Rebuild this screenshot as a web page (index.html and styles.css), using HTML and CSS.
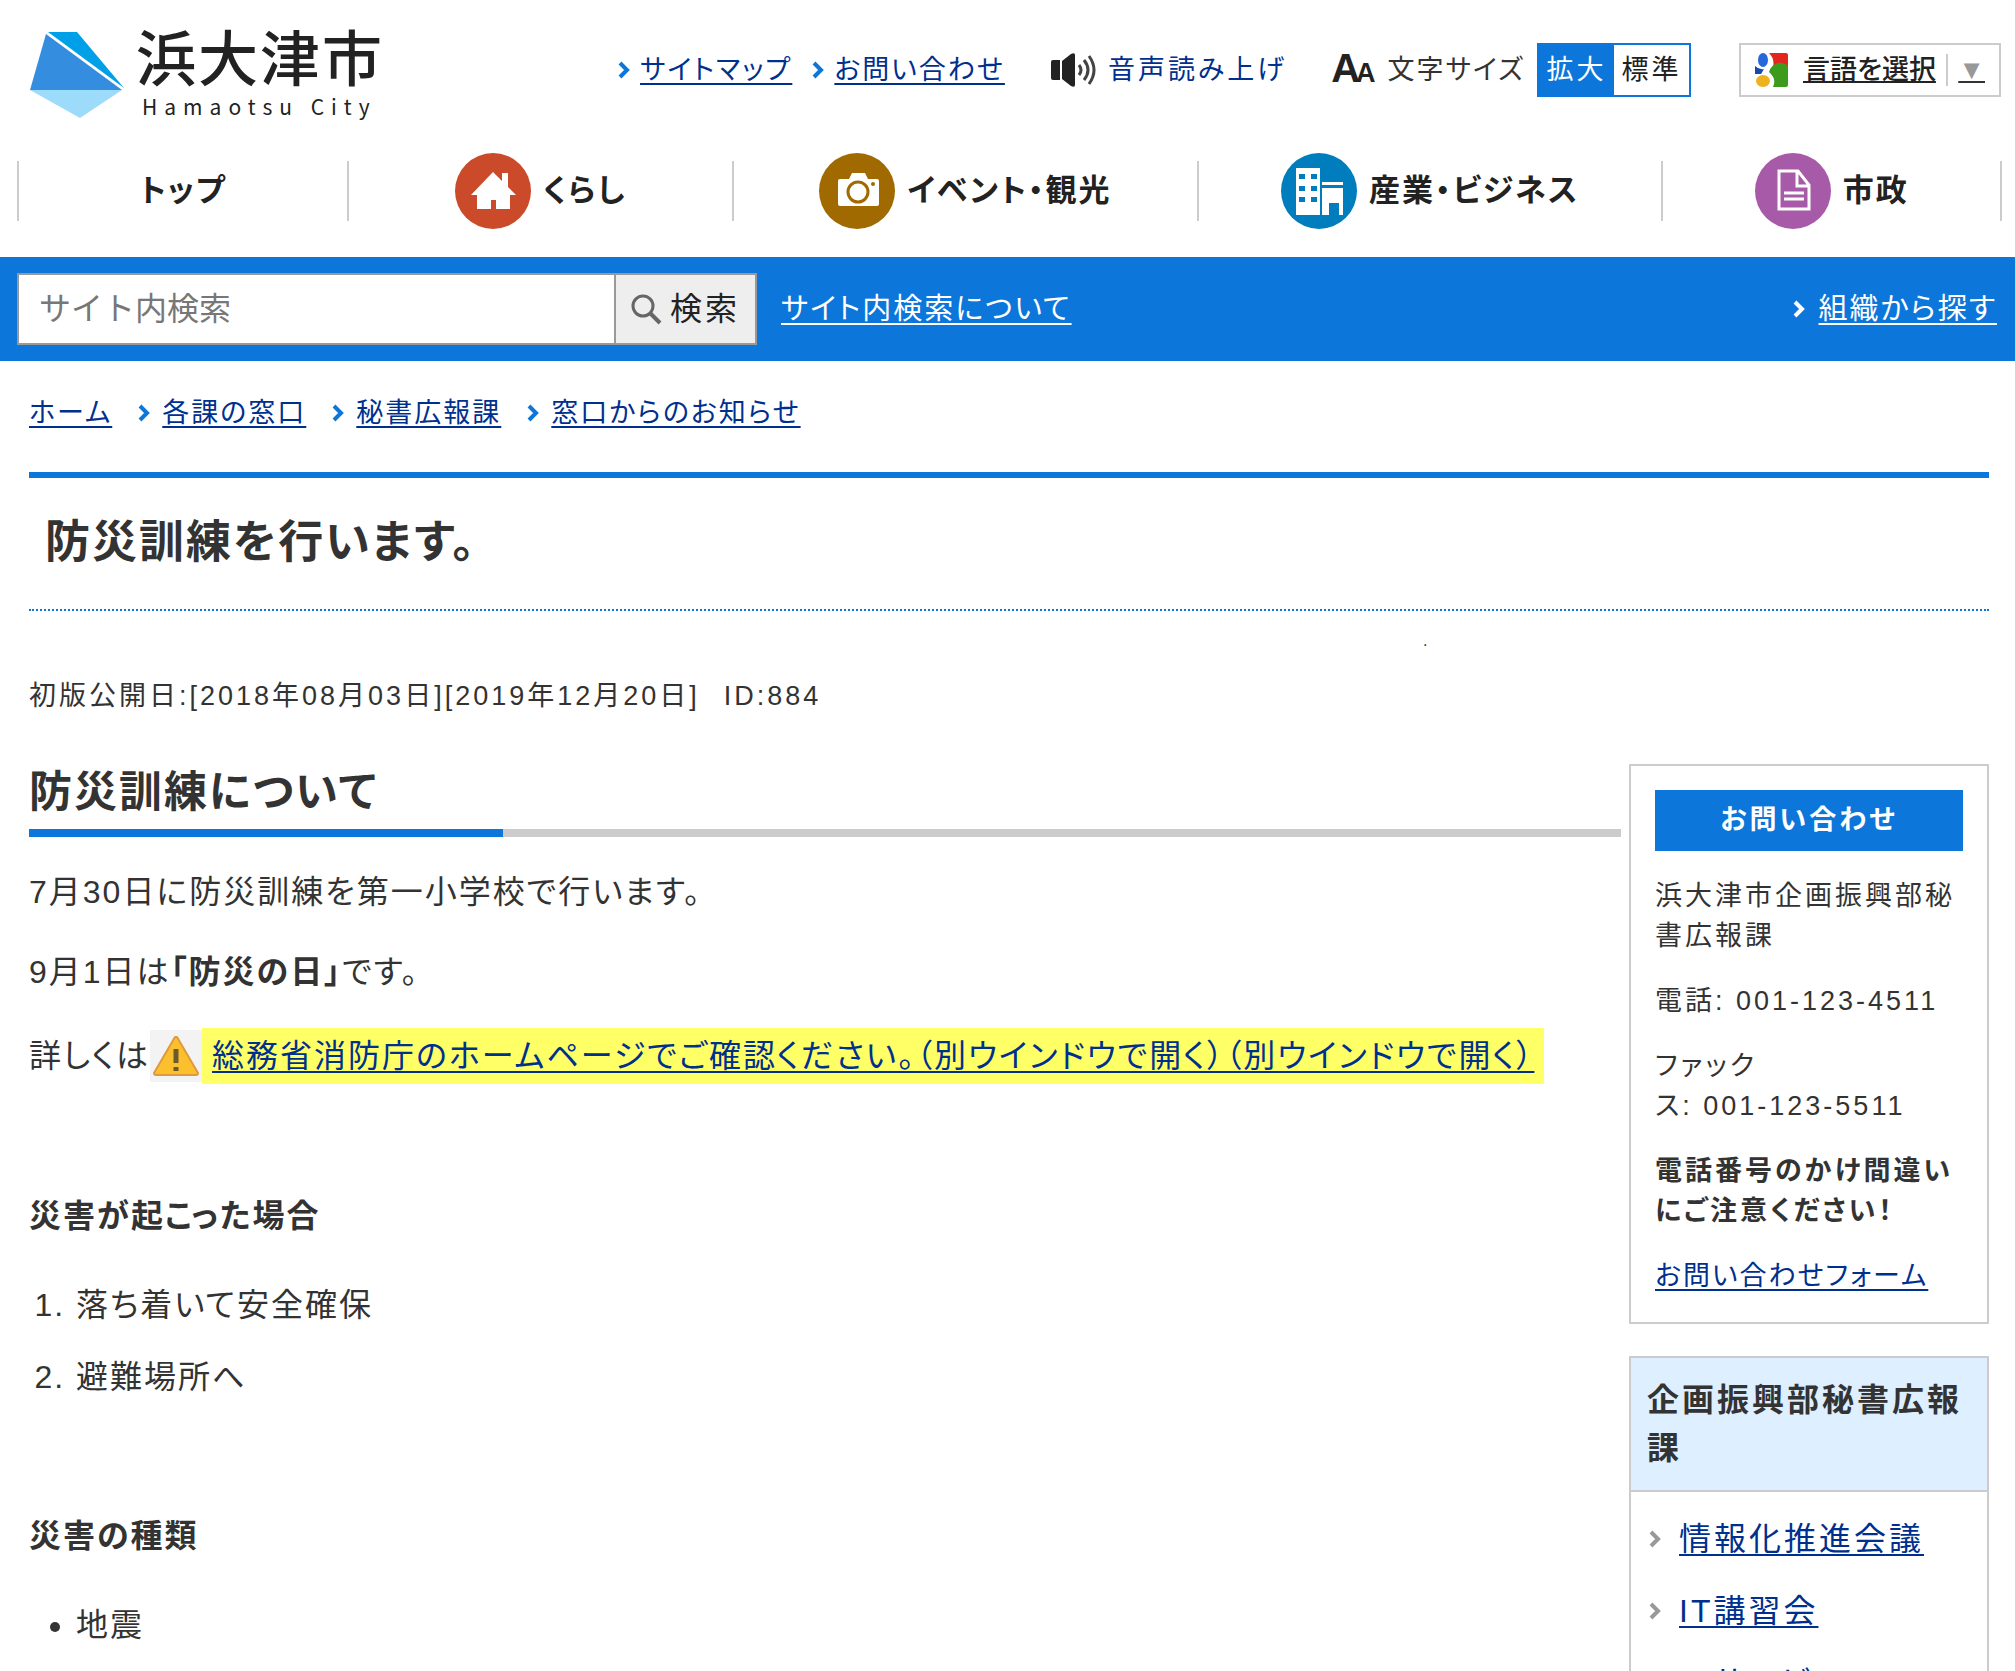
FILE: index.html
```html
<!DOCTYPE html>
<html lang="ja">
<head>
<meta charset="utf-8">
<title>防災訓練を行います。 | 浜大津市</title>
<link rel="stylesheet" href="styles.css">
</head>
<body>
<svg class="defs" width="0" height="0" aria-hidden="true">
  <symbol id="chevron" viewBox="0 0 12 18"><path d="M2 2l7 7-7 7" fill="none" stroke="currentColor" stroke-width="4"/></symbol>
</svg>
<header class="header">
  <a class="logo" href="#">
    <svg class="logo-mark" viewBox="0 0 94 86" aria-hidden="true">
      <path d="M16 2L0 58h92z" fill="#358de0"/>
      <path d="M18 0h29l47 56z" fill="#00a0e9"/>
      <path d="M0 58h92L50 86z" fill="#9cdcfa"/>
    </svg>
    <span class="logo-text"><span class="logo-ja">浜大津市</span><span class="logo-en">Hamaotsu City</span></span>
  </a>
  <div class="tools">
    <ul class="tool-links">
      <li><svg class="chev"><use href="#chevron"/></svg><a href="#">サイトマップ</a></li>
      <li><svg class="chev"><use href="#chevron"/></svg><a href="#">お問い合わせ</a></li>
    </ul>
    <a class="speech" href="#">
      <svg width="45" height="34" viewBox="0 0 45 34" aria-hidden="true"><path d="M0 9q0-2 2-2h7v20H2q-2 0-2-2zM11 8l9-7q4-2 4 1v30q0 3-4 1l-9-7z" fill="#222"/><g fill="none" stroke="#444" stroke-width="3"><path d="M28 12q4 5 0 10M33 7q8 10 0 20M38 3q10 14 0 28"/></g></svg>
      音声読み上げ
    </a>
    <div class="size">
      <span class="size-icon" aria-hidden="true"><b>A</b><b class="small-a">A</b></span>
      <span class="size-label">文字サイズ</span>
      <div class="size-switch"><button class="on" type="button">拡大</button><button type="button">標準</button></div>
    </div>
    <button class="lang" type="button">
      <svg width="34" height="34" viewBox="0 0 34 34" aria-hidden="true"><path d="M14 0h17q2 0 2 2v12H18q2-8-4-14z" fill="#e3261f"/><path d="M14 19q2-7 9-9 6-1 10 3v19q0 2-2 2H18q4-8-4-15z" fill="#3c9a1c"/><ellipse cx="8" cy="7" rx="5" ry="7" fill="#2668dc"/><path d="M0 13q4 4 9 3l-3 5H0z" fill="#154bb0"/><ellipse cx="8" cy="28" rx="7" ry="6" fill="#eeb21c"/></svg>
      <span class="lang-text">言語を選択</span><span class="lang-arrow">▼</span>
    </button>
  </div>
</header>
<nav class="nav">
  <a href="#">トップ</a>
  <a href="#"><svg class="nav-icon" viewBox="0 0 76 76" aria-hidden="true"><circle cx="38" cy="38" r="38" fill="#ca4a2a"/><path d="M38 19l9 9v-8h6v14l8 8h-6v14H41v-9h-5v9H22V42h-6z" fill="#fff"/></svg>くらし</a>
  <a href="#"><svg class="nav-icon" viewBox="0 0 76 76" aria-hidden="true"><circle cx="38" cy="38" r="38" fill="#a16a00"/><path d="M19 28q0-2 2-2h9l3-6h13l3 6h9q2 0 2 2v23q0 2-2 2H21q-2 0-2-2z" fill="#fff"/><circle cx="39" cy="39" r="10" fill="none" stroke="#a16a00" stroke-width="3"/><circle cx="54" cy="31" r="2" fill="#a16a00"/></svg>イベント・観光</a>
  <a href="#"><svg class="nav-icon" viewBox="0 0 76 76" aria-hidden="true"><circle cx="38" cy="38" r="38" fill="#007dbc"/><path d="M15 15h24v47H15zM41 29h21v3H41zM41 35h21v27h-4V50H48v12h-7z" fill="#fff"/><path d="M18 21h6v5h-6zM30 21h6v5h-6zM18 33h6v5h-6zM30 33h6v5h-6zM18 44h6v5h-6zM30 44h6v5h-6z" fill="#007dbc"/></svg>産業・ビジネス</a>
  <a href="#"><svg class="nav-icon" viewBox="0 0 76 76" aria-hidden="true"><circle cx="38" cy="38" r="38" fill="#a75aa8"/><path d="M24 18h19l11 14v24H24zM42 18v15h12M29 40h20M29 46h20" fill="none" stroke="#fff" stroke-width="3"/></svg>市政</a>
</nav>
<div class="searchbar">
  <form class="search">
    <input type="search" aria-label="サイト内検索" placeholder="サイト内検索">
    <button type="button"><svg width="32" height="32" viewBox="0 0 32 32" aria-hidden="true"><circle cx="13" cy="13" r="10" fill="none" stroke="#666" stroke-width="3"/><path d="M20 20l10 10" stroke="#666" stroke-width="4"/></svg>検索</button>
  </form>
  <a href="#">サイト内検索について</a>
  <span class="org"><svg class="chev"><use href="#chevron"/></svg><a href="#">組織から探す</a></span>
</div>
<div class="page">
  <ol class="crumbs">
    <li><a href="#">ホーム</a></li>
    <li><svg class="chev"><use href="#chevron"/></svg><a href="#">各課の窓口</a></li>
    <li><svg class="chev"><use href="#chevron"/></svg><a href="#">秘書広報課</a></li>
    <li><svg class="chev"><use href="#chevron"/></svg><a href="#">窓口からのお知らせ</a></li>
  </ol>
  <h1>防災訓練を行います。</h1>
  <p class="dot">.</p>
  <p class="date"><span>初版公開日:[2018年08月03日][2019年12月20日]</span><span>ID:884</span></p>
  <div class="columns">
    <main class="main">
      <h2>防災訓練について</h2>
      <p>7月30日に防災訓練を第一小学校で行います。</p>
      <p>9月1日は<strong>「防災の日」</strong>です。</p>
      <p class="notice"><span>詳しくは</span><svg width="52" height="52" viewBox="0 0 52 52" aria-hidden="true"><path d="M0 0h52v52H0z" fill="#f3f3f3"/><path d="M25 7L4 43q0 2 2 2h40q2 0 2-2L27 7z" fill="#fcc02e" stroke="#e09a3c" stroke-width="2" stroke-linejoin="round"/><path d="M26 19v14M26 37v4" stroke="#6b5a2c" stroke-width="5"/></svg><a class="mark" href="#">総務省消防庁のホームページでご確認ください。（別ウインドウで開く）（別ウインドウで開く）</a></p>
      <h3>災害が起こった場合</h3>
      <ol><li>落ち着いて安全確保</li><li>避難場所へ</li></ol>
      <h3>災害の種類</h3>
      <ul><li>地震</li></ul>
    </main>
    <aside class="side">
      <section class="contact">
        <h2>お問い合わせ</h2>
        <p>浜大津市企画振興部秘書広報課</p>
        <p>電話: 001-123-4511</p>
        <p>ファック<br>ス: 001-123-5511</p>
        <p><strong>電話番号のかけ間違いにご注意ください！</strong></p>
        <p><a href="#">お問い合わせフォーム</a></p>
      </section>
      <section class="dept">
        <h2>企画振興部秘書広報課</h2>
        <ul>
          <li><svg class="chev"><use href="#chevron"/></svg><a href="#">情報化推進会議</a></li>
          <li><svg class="chev"><use href="#chevron"/></svg><a href="#">IT講習会</a></li>
          <li><svg class="chev"><use href="#chevron"/></svg><a href="#">ITサービス</a></li>
        </ul>
      </section>
    </aside>
  </div>
</div>
</body>
</html>
```
FILE: styles.css
```css
* { box-sizing: border-box; }
body {
  margin: 0;
  background: #fff;
  color: #333;
  font: 32px/48px "Liberation Sans", "Noto Sans CJK JP", sans-serif;
  font-feature-settings: "palt";
  letter-spacing: 2px;
}
a { color: #00308e; text-underline-offset: 4px; text-decoration-thickness: 2px; }
button, input { font: inherit; letter-spacing: inherit; color: #222; }
ul, ol { margin: 0; padding: 0; }
svg { flex: none; }
.defs { position: absolute; }
.chev { width: 12px; height: 18px; color: #0d76da; }

.header { display: flex; justify-content: space-between; padding: 28px 14px 0 30px; height: 140px; font-size: 27px; }
.logo { display: flex; gap: 12px; color: #222; text-decoration: none; }
.logo-mark { width: 94px; height: 86px; margin-top: 4px; }
.logo-text { display: flex; flex-direction: column; padding-top: 2px; }
.logo-ja { font-size: 60px; line-height: 62px; font-weight: 500; font-feature-settings: normal; }
.logo-en { font: 21px/28px "Noto Sans CJK JP", sans-serif; letter-spacing: 7px; padding-left: 6px; }
.tools { display: flex; align-items: center; height: 84px; }
.tool-links { display: flex; gap: 20px; list-style: none; }
.tool-links li { display: flex; align-items: center; gap: 10px; }
.speech { display: flex; align-items: center; gap: 12px; margin-left: 46px; text-decoration: none; letter-spacing: 3px; }
.size { display: flex; align-items: center; margin-left: 44px; }
.size-icon { color: #222; font: 40px/40px "Liberation Sans", sans-serif; letter-spacing: 0; }
.size-icon .small-a { font-size: 27px; margin-left: -4px; }
.size-label { margin: 0 12px; }
.size-switch { display: flex; height: 54px; border: 2px solid #0d76da; letter-spacing: 3px; }
.size-switch button { width: 75px; border: 0; padding: 0; background: #fff; }
.size-switch .on { background: #0d76da; color: #fff; }
.lang { display: flex; align-items: center; height: 54px; width: 262px; margin-left: 48px; padding: 0 14px; border: 2px solid #ccc; background: #fff; font-size: 27px; letter-spacing: 0; }
.lang-text { margin-left: 14px; font-weight: 500; text-decoration: underline; }
.lang-arrow { margin-left: auto; padding-left: 10px; border-left: 2px solid #ccc; line-height: 32px; color: #999; text-decoration: underline #333; }

.nav { display: grid; grid-template-columns: 330fr 384fr 464fr 464fr 340fr; align-items: center; margin: 0 13px 0 17px; height: 117px; font-size: 31px; font-weight: bold; }
.nav a { display: flex; align-items: center; justify-content: center; gap: 12px; height: 60px; margin-bottom: 16px; border-left: 2px solid #ccc; color: #222; text-decoration: none; }
.nav a:last-child { border-right: 2px solid #ccc; }
.nav-icon { width: 76px; height: 76px; }

.searchbar { display: flex; align-items: center; height: 104px; padding: 0 18px 0 17px; background: #0d76da; }
.searchbar a { color: #fff; font-size: 29px; }
.search { display: flex; width: 740px; height: 72px; margin-right: 24px; border: 2px solid #999; }
.search input { flex: 1; min-width: 0; border: 0; padding: 0 20px; background: #fff; letter-spacing: 0; font-feature-settings: normal; }
.search input::placeholder { color: #777; }
.search button { display: flex; align-items: center; gap: 8px; width: 141px; padding: 0 14px; border: 0; border-left: 2px solid #999; background: #eee; letter-spacing: 3px; }
.org { display: flex; align-items: center; gap: 14px; margin-left: auto; }
.org .chev { color: #fff; }

.page { padding: 0 26px 0 29px; }
.crumbs { display: flex; gap: 26px; padding: 28px 0 35px; font-size: 27px; list-style: none; }
.crumbs li { display: flex; align-items: center; gap: 12px; }
h1 { margin: 0; padding: 33px 16px 34px; border-top: 6px solid #0d76da; border-bottom: 2px dotted #0d76da; font-size: 45px; line-height: 64px; }
.dot { margin: 12px 0 0 1394px; font-size: 16px; line-height: 36px; }
.date { display: flex; gap: 24px; margin: 13px 0 0; font-size: 27px; letter-spacing: 3px; }
.columns { display: flex; align-items: flex-start; gap: 8px; margin-top: 44px; }
.main { flex: 1; }
.main h2 { margin: 0 0 31px; padding-bottom: 9px; border-bottom: 8px solid; border-image: linear-gradient(90deg, #0d76da 30%, #ccc 30%) 8; font-size: 43px; line-height: 56px; }
.main p { margin: 0 0 32px; }
.main .notice { display: flex; align-items: center; margin: 0 0 108px; }
.mark { background: #ff6; padding: 4px 10px; }
h3 { margin: 0 0 41px; font-size: 32px; }
.main ol, .main ul { padding-left: 47px; margin-bottom: 111px; }
.main li { margin-bottom: 24px; }
.side { width: 360px; letter-spacing: 3px; }
.contact { padding: 24px 24px 26px; border: 2px solid #ccc; font-size: 27px; line-height: 40px; }
.contact h2 { margin: 0 0 25px; background: #0d76da; color: #fff; font-size: 27px; line-height: 61px; text-align: center; }
.contact p { margin: 0 0 25px; }
.contact p:last-child { margin: 0; }
.contact a { letter-spacing: 2px; }
.dept { margin-top: 32px; border: 2px solid #ccc; }
.dept h2 { margin: 0; padding: 18px 16px; border-bottom: 2px solid #ccc; background: #deefff; font-size: 32px; line-height: 48px; }
.dept ul { padding: 23px 18px; list-style: none; }
.dept li { display: flex; align-items: center; gap: 18px; margin-bottom: 24px; }
.dept .chev { color: #999; }
```
